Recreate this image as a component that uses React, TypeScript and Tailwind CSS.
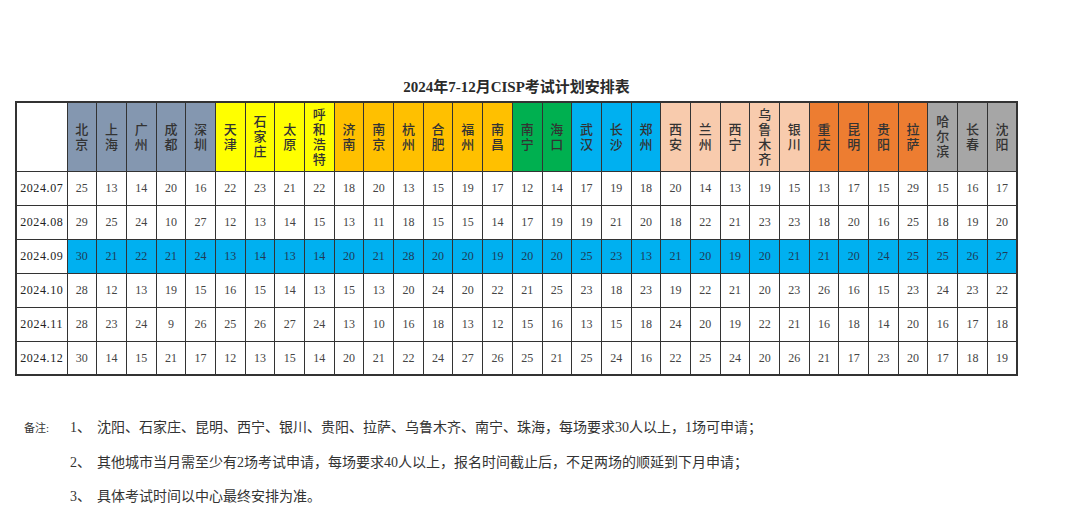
const cities: { name: string; color: string }[] = [
  { name: '北京', color: 'bg-[#8497b0]' },
  { name: '上海', color: 'bg-[#8497b0]' },
  { name: '广州', color: 'bg-[#8497b0]' },
  { name: '成都', color: 'bg-[#8497b0]' },
  { name: '深圳', color: 'bg-[#8497b0]' },
  { name: '天津', color: 'bg-[#ffff00]' },
  { name: '石家庄', color: 'bg-[#ffff00]' },
  { name: '太原', color: 'bg-[#ffff00]' },
  { name: '呼和浩特', color: 'bg-[#ffff00]' },
  { name: '济南', color: 'bg-[#ffc000]' },
  { name: '南京', color: 'bg-[#ffc000]' },
  { name: '杭州', color: 'bg-[#ffc000]' },
  { name: '合肥', color: 'bg-[#ffc000]' },
  { name: '福州', color: 'bg-[#ffc000]' },
  { name: '南昌', color: 'bg-[#ffc000]' },
  { name: '南宁', color: 'bg-[#00b050]' },
  { name: '海口', color: 'bg-[#00b050]' },
  { name: '武汉', color: 'bg-[#00b0f0]' },
  { name: '长沙', color: 'bg-[#00b0f0]' },
  { name: '郑州', color: 'bg-[#00b0f0]' },
  { name: '西安', color: 'bg-[#f8cbad]' },
  { name: '兰州', color: 'bg-[#f8cbad]' },
  { name: '西宁', color: 'bg-[#f8cbad]' },
  { name: '乌鲁木齐', color: 'bg-[#f8cbad]' },
  { name: '银川', color: 'bg-[#f8cbad]' },
  { name: '重庆', color: 'bg-[#ed7d31]' },
  { name: '昆明', color: 'bg-[#ed7d31]' },
  { name: '贵阳', color: 'bg-[#ed7d31]' },
  { name: '拉萨', color: 'bg-[#ed7d31]' },
  { name: '哈尔滨', color: 'bg-[#a6a6a6]' },
  { name: '长春', color: 'bg-[#a6a6a6]' },
  { name: '沈阳', color: 'bg-[#a6a6a6]' },
];

const rows: { month: string; values: number[]; highlight?: boolean }[] = [
  { month: '2024.07', values: [25, 13, 14, 20, 16, 22, 23, 21, 22, 18, 20, 13, 15, 19, 17, 12, 14, 17, 19, 18, 20, 14, 13, 19, 15, 13, 17, 15, 29, 15, 16, 17] },
  { month: '2024.08', values: [29, 25, 24, 10, 27, 12, 13, 14, 15, 13, 11, 18, 15, 15, 14, 17, 19, 19, 21, 20, 18, 22, 21, 23, 23, 18, 20, 16, 25, 18, 19, 20] },
  { month: '2024.09', highlight: true, values: [30, 21, 22, 21, 24, 13, 14, 13, 14, 20, 21, 28, 20, 20, 19, 20, 20, 25, 23, 13, 21, 20, 19, 20, 21, 21, 20, 24, 25, 25, 26, 27] },
  { month: '2024.10', values: [28, 12, 13, 19, 15, 16, 15, 14, 13, 15, 13, 20, 24, 20, 22, 21, 25, 23, 18, 23, 19, 22, 21, 20, 23, 26, 16, 15, 23, 24, 23, 22] },
  { month: '2024.11', values: [28, 23, 24, 9, 26, 25, 26, 27, 24, 13, 10, 16, 18, 13, 12, 15, 16, 13, 15, 18, 24, 20, 19, 22, 21, 16, 18, 14, 20, 16, 17, 18] },
  { month: '2024.12', values: [30, 14, 15, 21, 17, 12, 13, 15, 14, 20, 21, 22, 24, 27, 26, 25, 21, 25, 24, 16, 22, 25, 24, 20, 26, 21, 17, 23, 20, 17, 18, 19] },
];

const notes = [
  '沈阳、石家庄、昆明、西宁、银川、贵阳、拉萨、乌鲁木齐、南宁、珠海，每场要求30人以上，1场可申请；',
  '其他城市当月需至少有2场考试申请，每场要求40人以上，报名时间截止后，不足两场的顺延到下月申请；',
  '具体考试时间以中心最终安排为准。',
];

const font = { fontFamily: '"Liberation Serif", "Noto Sans CJK SC", serif' };

export default function App() {
  return (
    <div className="w-[1080px] h-[528px] bg-white text-[#222] overflow-hidden" style={font}>
      <div className="pt-[78px] pl-[15px]">
        <h1 className="w-[1003px] text-center text-[15px] font-semibold leading-[18px] mb-[5px] text-[#2a2a2a]">
          2024年7-12月CISP考试计划安排表
        </h1>

        <table className="w-[1003px] table-fixed border-collapse border-2 border-[#333]">
          <colgroup>
            <col className="w-[51px]" />
            {cities.map(c => (
              <col key={c.name} />
            ))}
          </colgroup>
          <thead>
            <tr className="h-[69px]">
              <th className="border border-[#333] bg-white" />
              {cities.map(c => (
                <th key={c.name} className={`border border-[#333] ${c.color} p-0 align-middle`}>
                  <div className="flex flex-col items-center text-[13px] leading-[15px] font-medium text-[#333]">
                    {c.name.split('').map((ch, i) => (
                      <span key={i}>{ch}</span>
                    ))}
                  </div>
                </th>
              ))}
            </tr>
          </thead>
          <tbody>
            {rows.map(r => (
              <tr key={r.month} className="h-[34px]">
                <td className="border border-[#333] bg-white text-center text-[12px] font-normal text-[#222] p-0 tracking-[0.6px]">
                  {r.month}
                </td>
                {r.values.map((v, i) => (
                  <td
                    key={i}
                    className={`border border-[#333] text-center text-[12px] p-0 ${
                      r.highlight ? 'bg-[#00b0f0] text-[#1f3b57]' : 'bg-white text-[#444]'
                    }`}
                  >
                    {v}
                  </td>
                ))}
              </tr>
            ))}
          </tbody>
        </table>

        {/* Notes */}
        <div className="mt-[43px] flex flex-col gap-[17px] text-[14px] leading-[17px] text-[#333]">
          {notes.map((n, i) => (
            <div key={i} className="flex items-baseline">
              <span className="w-[55px] pl-[9px] text-[11px]">{i === 0 ? '备注:' : ''}</span>
              <span className="w-[27px]">{i + 1}、</span>
              <span>{n}</span>
            </div>
          ))}
        </div>
      </div>
    </div>
  );
}
